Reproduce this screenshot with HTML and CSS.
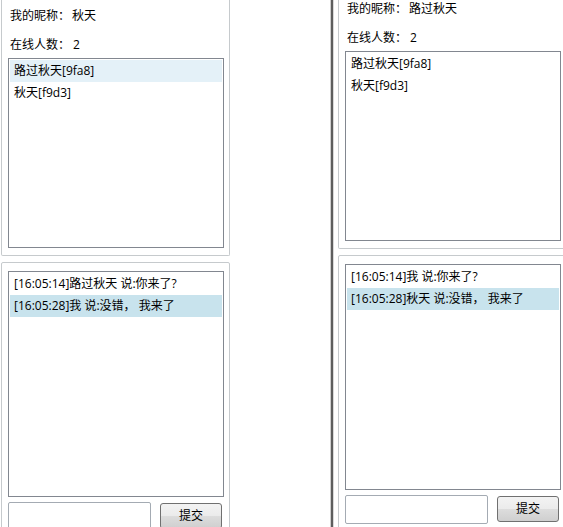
FILE: index.html
```html
<!DOCTYPE html>
<html lang="zh-CN">
<head>
<meta charset="utf-8">
<title>聊天室</title>
<link rel="stylesheet" href="styles.css">
</head>
<body>
<div class="screen">
  <div class="win win-left">
    <div class="win-inner">
      <section class="group group-top">
        <div class="info"><span class="label">我的昵称：</span><span class="value">秋天</span></div>
        <div class="info info-count"><span class="label">在线人数：</span><span class="value">2</span></div>
        <ul class="list list-users">
          <li class="item item-soft">路过秋天[9fa8]</li>
          <li class="item">秋天[f9d3]</li>
        </ul>
      </section>
      <section class="group group-chat">
        <ul class="list list-chat">
          <li class="item">[16:05:14]路过秋天 说:你来了?</li>
          <li class="item item-sel">[16:05:28]我 说:没错， 我来了</li>
        </ul>
        <div class="compose">
          <div class="input"></div>
          <button class="btn" type="button">提交</button>
        </div>
      </section>
    </div>
  </div>
  <div class="frame"></div>
  <div class="win win-right">
    <div class="win-inner win-inner-up">
      <section class="group group-top">
        <div class="info"><span class="label">我的昵称：</span><span class="value">路过秋天</span></div>
        <div class="info info-count"><span class="label">在线人数：</span><span class="value">2</span></div>
        <ul class="list list-users">
          <li class="item">路过秋天[9fa8]</li>
          <li class="item">秋天[f9d3]</li>
        </ul>
      </section>
      <section class="group group-chat">
        <ul class="list list-chat">
          <li class="item">[16:05:14]我 说:你来了?</li>
          <li class="item item-sel">[16:05:28]秋天 说:没错， 我来了</li>
        </ul>
        <div class="compose">
          <div class="input"></div>
          <button class="btn" type="button">提交</button>
        </div>
      </section>
    </div>
  </div>
</div>
</body>
</html>
```
FILE: styles.css
```css
html, body {
  margin: 0;
  padding: 0;
  background: #ffffff;
}
body {
  width: 563px;
  height: 527px;
  overflow: hidden;
  font: 12px "Open Sans", "Noto Sans CJK SC", sans-serif;
  color: #000000;
}
.screen {
  display: flex;
  height: 527px;
  overflow: hidden;
}
.win {
  flex: none;
  height: 527px;
  overflow: hidden;
  box-sizing: border-box;
  background: #ffffff;
}
.win-left {
  width: 330px;
  padding-left: 1px;
}
.win-right {
  flex: 1 1 auto;
  min-width: 0;
  padding-left: 4px;
}
.frame {
  flex: none;
  width: 2px;
  height: 527px;
  background: #5e5e5e;
  border-left: 1px solid #cfcfcf;
  border-right: 1px solid #d9d9d9;
}
.win-inner {
  width: 229px;
}
.win-inner-up {
  margin-top: -7px;
}
.group {
  box-sizing: border-box;
  width: 229px;
  border: 1px solid #c6cacd;
  border-radius: 2px;
}
.group-top {
  border-top: none;
  border-top-left-radius: 0;
  border-top-right-radius: 0;
  padding: 7px 4px 7px 6px;
}
.group-chat {
  margin-top: 6px;
  padding: 8px 4px 8px 6px;
}
.info {
  display: flex;
  height: 17px;
  line-height: 17px;
  padding-left: 2px;
  white-space: nowrap;
}
.info-count {
  margin-top: 12px;
}
.label {
  width: 60px;
}
.value {
  margin-left: 2px;
}
.info-count .value {
  margin-left: 3px;
}
.list {
  list-style: none;
  margin: 0;
  padding: 1px;
  box-sizing: border-box;
  width: 216px;
  border: 1px solid #828790;
  background: #ffffff;
}
.list-users {
  margin-top: 5px;
  height: 190px;
}
.list-chat {
  height: 226px;
}
.item {
  height: 22px;
  line-height: 22px;
  padding: 0 4px;
  white-space: nowrap;
}
.item-soft {
  background: #e4f1f8;
}
.item-sel {
  background: #c8e3ed;
}
.compose {
  display: flex;
  align-items: flex-start;
  margin-top: 5px;
}
.input {
  box-sizing: border-box;
  width: 143px;
  height: 29px;
  border: 1px solid #a4abb3;
  border-radius: 2px;
  background: #ffffff;
}
.btn {
  box-sizing: border-box;
  width: 62px;
  height: 26px;
  margin: 1px 0 0 9px;
  padding: 0;
  border: 1px solid #707070;
  border-radius: 3px;
  background: linear-gradient(#f3f3f3 0%, #ebebeb 50%, #dddddd 50%, #cfcfcf 100%);
  font: 12px "Open Sans", "Noto Sans CJK SC", sans-serif;
  color: #000000;
  line-height: 24px;
}
```
